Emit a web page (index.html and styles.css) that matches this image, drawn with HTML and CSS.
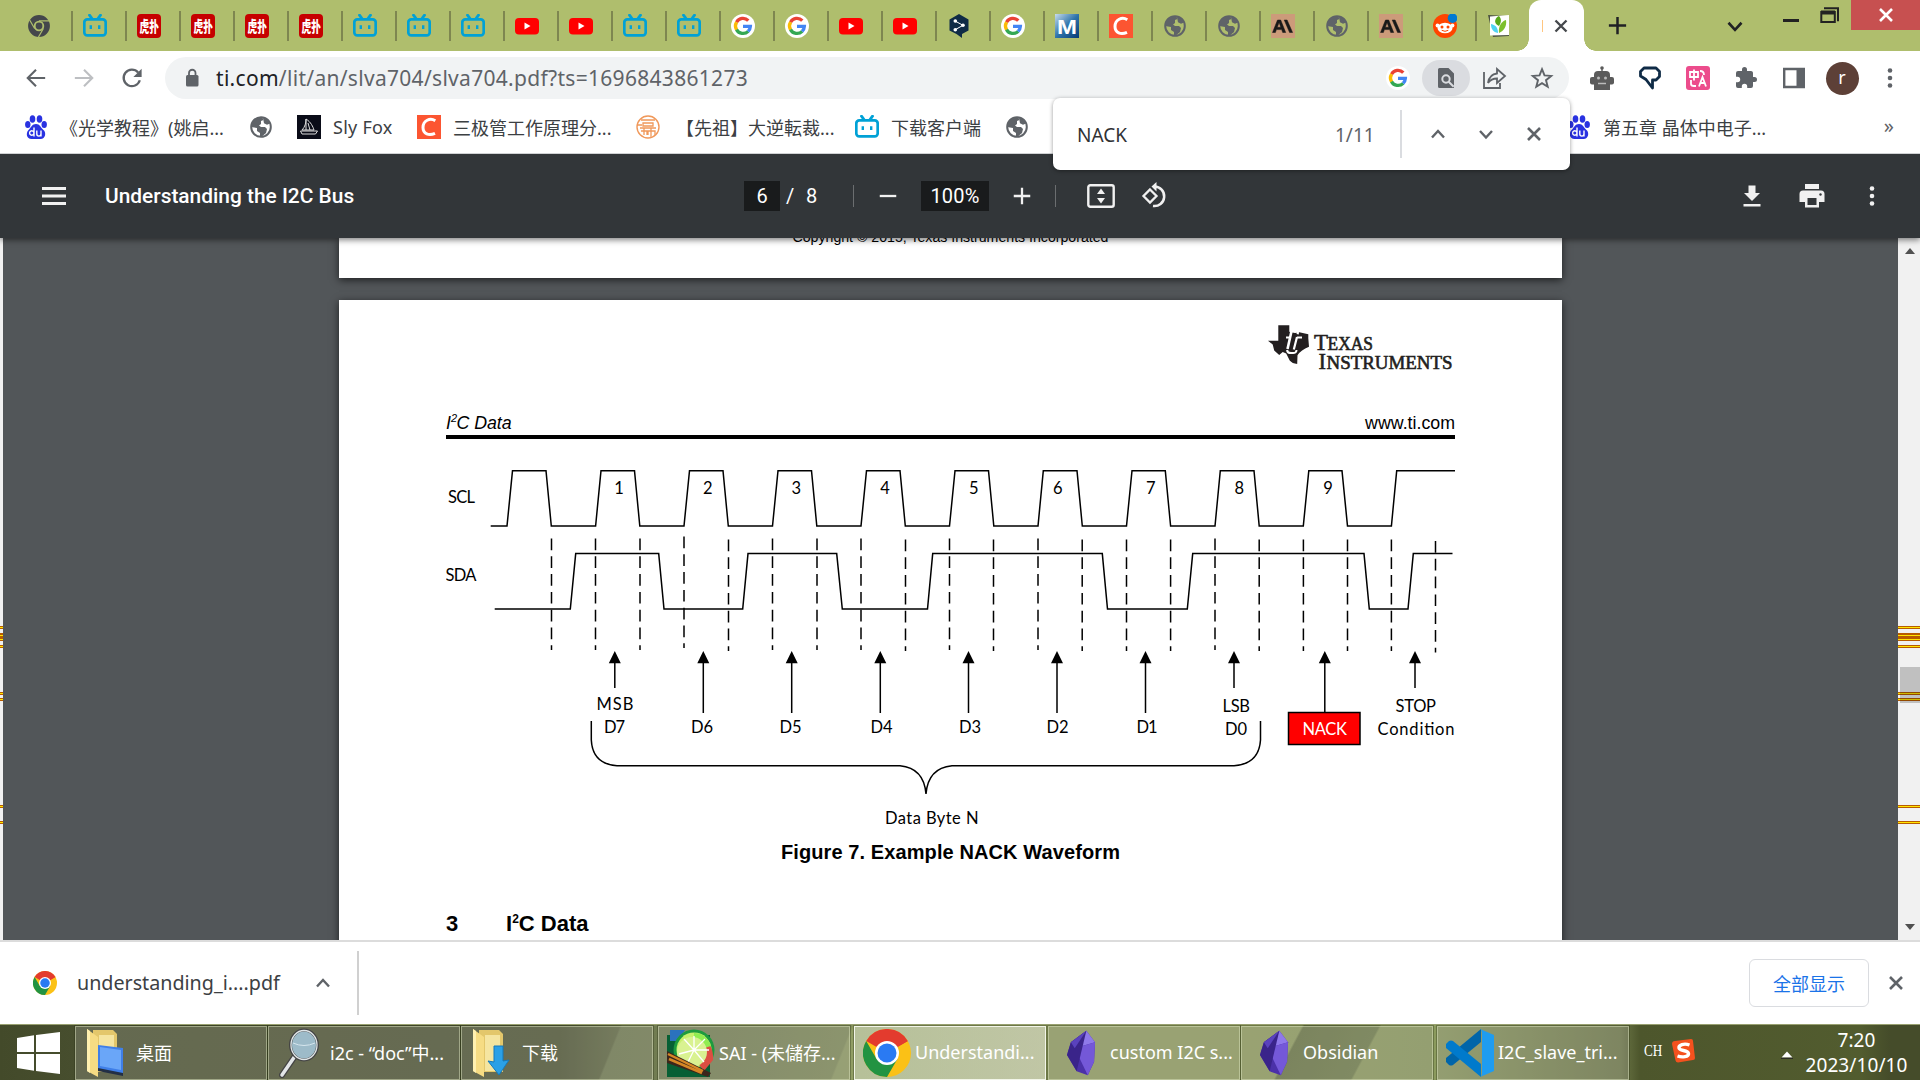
FILE: index.html
```html
<!DOCTYPE html>
<html lang="zh-CN">
<head>
<meta charset="utf-8">
<title>Understanding the I2C Bus</title>
<link rel="stylesheet" href="styles.css">
</head>
<body>
<svg class="sprite" aria-hidden="true">
  <symbol id="bili" viewBox="0 0 24 24"><path d="M6.5 1.200 9 4.600M17.500 1.200 15 4.600" stroke="#00a1d6" stroke-width="2.800" stroke-linecap="round"/><rect x="1.300" y="5.400" width="21.400" height="16" rx="3" fill="none" stroke="#00a1d6" stroke-width="2.700"/><path d="M7.800 11.300v3.600M16.200 11.300v3.600" stroke="#00a1d6" stroke-width="2.400"/></symbol>
  <symbol id="hupu" viewBox="0 0 24 24"><rect width="24" height="24" rx="4" fill="#c60000"/><text x="2.500" y="17.500" font-family="Noto Sans CJK SC, sans-serif" font-weight="900" font-size="15" textLength="19.500" lengthAdjust="spacingAndGlyphs" fill="#fff">虎扑</text></symbol>
  <symbol id="yt" viewBox="0 0 24 24"><rect y="4" width="24" height="16.500" rx="4" fill="#f00"/><path d="M9.500 8.600v7l6-3.500z" fill="#fff"/></symbol>
  <symbol id="g" viewBox="0 0 24 24"><circle cx="12" cy="12" r="12" fill="#fff"/><g fill="none" stroke-width="3.300"><path d="M5.500 8.200A7.400 7.400 0 0 1 17.300 6.700" stroke="#ea4335"/><path d="M5.600 15.800a7.400 7.400 0 0 1 0-7.700" stroke="#fbbc05"/><path d="M17.200 17.300A7.400 7.400 0 0 1 5.500 15.600" stroke="#34a853"/><path d="M12 12.300h7.400a7.400 7.400 0 0 1-2.300 5.100" stroke="#4285f4"/></g></symbol>
  <symbol id="deepl" viewBox="0 0 24 24"><path d="M12 0 21.500 5.500v11L15 20v4l-5.500-4L2.500 16.500v-11z" fill="#0f2b46"/><path d="M8 7l8 4.300-8 4.500" stroke="#fff" fill="none"/><circle cx="8.300" cy="7" r="1.800" fill="#fff"/><circle cx="16" cy="11.300" r="1.800" fill="#fff"/><circle cx="8.300" cy="15.800" r="1.800" fill="#fff"/></symbol>
  <symbol id="mdn" viewBox="0 0 24 24"><defs><linearGradient id="mg" x2="1" y2="1"><stop offset="0" stop-color="#c8dcec"/><stop offset=".5" stop-color="#2e74ab"/><stop offset="1" stop-color="#053a75"/></linearGradient></defs><rect width="24" height="24" fill="url(#mg)"/><text x="2" y="19.500" font-family="Liberation Sans" font-weight="700" font-size="21" textLength="20" lengthAdjust="spacingAndGlyphs" fill="#fff">M</text></symbol>
  <symbol id="csdn" viewBox="0 0 24 24"><rect width="24" height="24" fill="#fc5531"/><path d="M18.300 5.700C13 2.500 6 5.500 6 12.500c0 6.500 6 8.500 12 5.800" fill="none" stroke="#fff" stroke-width="3"/></symbol>
  <symbol id="globe" viewBox="0 0 24 24"><circle cx="12" cy="12" r="9.800" fill="none" stroke="#5f6368" stroke-width="2"/><path d="M2 12C2 6 7 2 13 2l1.500 3-2.500 1v3l-2 1.500L12 12h4l2 2-1 4-4.500 3.700-1.500-.5V18l-3-2v-3z" fill="#5f6368"/><path d="m14 3 4 1.500 3 4-3 1.200-3-1.400z" fill="#5f6368"/></symbol>
  <symbol id="anth" viewBox="0 0 24 24"><rect width="24" height="24" fill="#cc9b7a"/><path d="M1.500 18.500 6.500 6h3.200l5 12.500h-3L10.700 15.600H5.400l-1 2.900zM6.300 13.200h3.500L8.100 8.600zM13.200 6h2.900l5.500 12.500h-3z" fill="#191919" stroke="#191919" stroke-width=".5"/></symbol>
  <symbol id="reddit" viewBox="0 0 24 24"><circle cx="12" cy="12" r="12" fill="#ff4500"/><ellipse cx="12" cy="14" rx="7.500" ry="5.200" fill="#fff"/><circle cx="4.500" cy="11.500" r="1.900" fill="#fff"/><circle cx="19.500" cy="11.500" r="1.900" fill="#fff"/><circle cx="9" cy="13" r="1.500" fill="#ff4500"/><circle cx="15" cy="13" r="1.500" fill="#ff4500"/><path d="M8.700 16.300q3.300 2 6.600 0" stroke="#ff4500" fill="none"/><circle cx="19.500" cy="4.200" r="4.800" fill="#0079d3"/></symbol>
  <symbol id="leaf" viewBox="0 0 24 24"><path d="m1 1 20 1 1 20-16 1z" fill="#4d5344"/><path d="M3 2.500 22 1v20l-19 .5z" fill="#fff"/><path d="M12 12C5 9 9 3 12 2c3 3 2 7 0 10z" fill="#58a818"/><path d="M12 19c-1-7 3-12 7-13 1 6-2 11-7 13z" fill="#7dc02c"/><path d="M11 19c-5-1-7-4-7-9 5 1 7 4 7 9z" fill="#4fd3f2"/></symbol>
  <symbol id="baidu" viewBox="0 0 24 24"><g fill="#2932e1"><ellipse cx="8.500" cy="4" rx="2.800" ry="3.800"/><ellipse cx="15.500" cy="4" rx="2.800" ry="3.800"/><ellipse cx="3.800" cy="9.600" rx="2.700" ry="3.500"/><ellipse cx="20.200" cy="9.600" rx="2.700" ry="3.500"/><path d="M12 9c4 0 4.500 3.500 7.500 6s2 9-3 9h-9c-5 0-6-6-3-9S8 9 12 9z"/></g><path d="M10 12.500v9M10 18a2.200 2.200 0 1 0 0 .1M12.800 15.500v3.500a2 2 0 0 0 4.200 0v-3.500v6" fill="none" stroke="#fff" stroke-width="1.400"/></symbol>
  <symbol id="chrome" viewBox="0 0 48 48"><circle cx="24" cy="24" r="24" fill="#fbc116"/><path d="M24 24 3.200 12A24 24 0 0 1 44.800 12z" fill="#e33b2e"/><path d="M24 24 24 12h20.800z" fill="#e33b2e"/><path d="M3.200 12A24 24 0 0 0 24 48l10.400-18L24 24 13.600 30z" fill="#229342"/><circle cx="24" cy="24" r="12" fill="#fff"/><circle cx="24" cy="24" r="9.500" fill="#2a7af3"/></symbol>
  <symbol id="x" viewBox="0 0 24 24"><path d="m6 6 12 12M18 6 6 18" stroke="currentColor" stroke-width="2.600" fill="none"/></symbol>
  <symbol id="up" viewBox="0 0 24 24"><path d="m6 15.500 6-6.500 6 6.500" stroke="currentColor" stroke-width="2.400" fill="none"/></symbol>
  <symbol id="down" viewBox="0 0 24 24"><path d="m6 9 6 6.500L18 9" stroke="currentColor" stroke-width="2.400" fill="none"/></symbol>
  <symbol id="dots" viewBox="0 0 24 24"><g fill="currentColor"><circle cx="12" cy="4.500" r="2.300"/><circle cx="12" cy="12" r="2.300"/><circle cx="12" cy="19.500" r="2.300"/></g></symbol>
  <symbol id="obs" viewBox="0 0 30 46"><path d="M20 0 29 12 28 32 21.500 46 10 42 0 25 4 12z" fill="#4b31a8"/><path d="M20 0 29 12 8 18z" fill="#8f79ea"/><path d="M8 18 29 12 28 32 21.500 46z" fill="#7458d8"/><path d="M20 0 4 12 0 25 10 42z" fill="#3a248a"/><path d="M20 0 4 12l4 6z" fill="#5a42bd"/></symbol>
  <symbol id="folder" viewBox="0 0 40 50"><path d="M7 2h20l4 4v38H7z" fill="#e3c76b"/><path d="M13 7h15v36H13z" fill="#f5e5a0"/><path d="M1 1l11 8v40L1 43z" fill="#f6dc83"/><path d="M1 1l3 2v42l-3-2z" fill="#fff0b0"/></symbol>
</svg>

<header class="tabs">
  <div class="first-tab"><svg class="i22" viewBox="0 0 24 24"><circle cx="12" cy="12" r="8.800" fill="none" stroke="#44474b" stroke-width="6.200"/><circle cx="12" cy="12" r="3.700" fill="#44474b"/><path d="M12 6.400h11M7.200 14.700 1.800 5.500M16.800 14.700 11.400 24" stroke="#afbe6d" stroke-width="1.300"/></svg></div>
  <div class="tab"><svg><use href="#bili"/></svg></div>
  <div class="tab"><svg><use href="#hupu"/></svg></div>
  <div class="tab"><svg><use href="#hupu"/></svg></div>
  <div class="tab"><svg><use href="#hupu"/></svg></div>
  <div class="tab"><svg><use href="#hupu"/></svg></div>
  <div class="tab"><svg><use href="#bili"/></svg></div>
  <div class="tab"><svg><use href="#bili"/></svg></div>
  <div class="tab"><svg><use href="#bili"/></svg></div>
  <div class="tab"><svg><use href="#yt"/></svg></div>
  <div class="tab"><svg><use href="#yt"/></svg></div>
  <div class="tab"><svg><use href="#bili"/></svg></div>
  <div class="tab"><svg><use href="#bili"/></svg></div>
  <div class="tab"><svg><use href="#g"/></svg></div>
  <div class="tab"><svg><use href="#g"/></svg></div>
  <div class="tab"><svg><use href="#yt"/></svg></div>
  <div class="tab"><svg><use href="#yt"/></svg></div>
  <div class="tab"><svg><use href="#deepl"/></svg></div>
  <div class="tab"><svg><use href="#g"/></svg></div>
  <div class="tab"><svg><use href="#mdn"/></svg></div>
  <div class="tab"><svg><use href="#csdn"/></svg></div>
  <div class="tab"><svg><use href="#globe"/></svg></div>
  <div class="tab"><svg><use href="#globe"/></svg></div>
  <div class="tab"><svg><use href="#anth"/></svg></div>
  <div class="tab"><svg><use href="#globe"/></svg></div>
  <div class="tab"><svg><use href="#anth"/></svg></div>
  <div class="tab"><svg><use href="#reddit"/></svg></div>
  <div class="tab"><svg><use href="#leaf"/></svg></div>
  <div class="tab-active"><i></i><svg><use href="#x"/></svg></div>
  <svg class="newtab" viewBox="0 0 24 24"><path d="M12 3v18M3 12h18" stroke="#202124" stroke-width="2.600"/></svg>
  <svg class="tabmenu"><use href="#down"/></svg>
  <div class="winbtns">
    <svg width="24" height="30" viewBox="0 0 24 30"><path d="M4 20.500h16" stroke="#222" stroke-width="3"/></svg>
    <svg width="24" height="30" viewBox="0 0 24 30"><path d="M6 8.200h14v13" fill="none" stroke="#222" stroke-width="2"/><path d="M3.300 12h13.500v10H3.300z" fill="none" stroke="#222" stroke-width="2"/><path d="M3 12.500h14" stroke="#222" stroke-width="4"/></svg>
    <div class="close"><svg><use href="#x"/></svg></div>
  </div>
</header>

<div class="toolbar">
  <svg class="nav" viewBox="0 0 24 24"><path d="M22 12H3.500M12 3l-9 9 9 9" fill="none" stroke="#5f6368" stroke-width="2.300"/></svg>
  <svg class="nav" viewBox="0 0 24 24"><path d="M2 12h18.500M12 3l9 9-9 9" fill="none" stroke="#bdbfc2" stroke-width="2.300"/></svg>
  <svg class="nav" viewBox="0 0 24 24"><path d="M20.500 14.500A9 9 0 1 1 18.700 6" fill="none" stroke="#5f6368" stroke-width="2.500"/><path d="M22.500 2v9h-9z" fill="#5f6368"/></svg>
  <div class="omnibox">
    <svg class="lock" viewBox="0 0 14 20"><rect x="1" y="7" width="12.500" height="11.500" rx="1.500" fill="#5f6368"/><path d="M4 8V5a3.200 3.200 0 0 1 6.500 0v3" fill="none" stroke="#5f6368" stroke-width="1.800"/></svg>
    <span class="url"><b>ti.com</b>/lit/an/slva704/slva704.pdf?ts=1696843861273</span>
    <div class="actions">
      <span><svg width="24" height="24"><use href="#g"/></svg></span>
      <span class="on"><svg width="24" height="24" viewBox="0 0 24 24"><path d="M5.500 2h9L20 7.500V22H5.500a1.500 1.500 0 0 1-1.500-1.500v-17A1.500 1.500 0 0 1 5.500 2z" fill="#5f6368"/><circle cx="12" cy="13" r="3.700" fill="none" stroke="#dadce0" stroke-width="2"/><path d="m14.700 15.700 5 5" stroke="#dadce0" stroke-width="2"/></svg></span>
      <span><svg width="26" height="24" viewBox="0 0 26 24"><path d="M3 6v16h16v-5" fill="none" stroke="#5f6368" stroke-width="1.800"/><path d="M7 17c1-6 4-9 9-9.500V3l8 7-8 7v-4.500c-4 0-6.500 1-9 4.500z" fill="none" stroke="#5f6368" stroke-width="1.800"/></svg></span>
      <span><svg width="24" height="24" viewBox="0 0 24 24"><path d="m12 3.200 2.500 6.200 6.700.5-5.200 4.300 1.700 6.500L12 17.100l-5.700 3.600L8 14.200 2.800 9.900l6.700-.5z" fill="none" stroke="#5f6368" stroke-width="1.900"/></svg></span>
    </div>
  </div>
  <div class="exts">
    <span><svg viewBox="0 0 24 24"><g fill="#5b5b5b"><circle cx="12" cy="2" r="1.800"/><path d="M11.300 2h1.400v4h-1.400z"/><path d="M4 9a4 4 0 0 1 4-4h8a4 4 0 0 1 4 4v15H4z"/><rect y="11" width="24" height="7.500" rx="2"/></g><circle cx="8.500" cy="12" r="1.500" fill="#bbb"/><circle cx="15.500" cy="12" r="1.500" fill="#bbb"/><path d="M8 17.500h8" stroke="#bbb" stroke-width="1.500"/></svg></span>
    <span><svg viewBox="0 0 24 24"><path d="M6 2h12l3.500 3.500v5L18 14h-3.500v8L8 13.500 2.500 10V5.500z" fill="none" stroke="#0f2b46" stroke-width="2.800" stroke-linejoin="round"/></svg></span>
    <span><svg viewBox="0 0 24 24"><rect width="24" height="24" rx="3" fill="#ec4c8c"/><path d="M4 6h8v5H4zM8 3.500v11M14 5q4 0 4 4M5 14v4q0 2 3 2h2M13 20.500l3.500-9.500 3.500 9.500M14.500 17h4.500" fill="none" stroke="#fff" stroke-width="1.800"/></svg></span>
    <span><svg viewBox="0 0 24 24"><path d="M20.500 11H19V7c0-1.100-.9-2-2-2h-4V3.500a2.500 2.500 0 0 0-5 0V5H4a2 2 0 0 0-2 2v3.800h1.500a2.700 2.700 0 0 1 0 5.400H2V20a2 2 0 0 0 2 2h3.800v-1.500a2.700 2.700 0 0 1 5.400 0V22H17a2 2 0 0 0 2-2v-4h1.500a2.500 2.500 0 0 0 0-5z" fill="#5f6368"/></svg></span>
    <span><svg viewBox="0 0 24 24"><path d="M2.200 3h19.600v18H2.200z" fill="none" stroke="#5f6368" stroke-width="2.400"/><path d="M14.500 3h7v18h-7z" fill="#5f6368"/></svg></span>
    <span><b class="avatar">r</b></span>
    <span><svg class="dim"><use href="#dots"/></svg></span>
  </div>
</div>

<nav class="bookmarks">
  <svg><use href="#baidu"/></svg><span class="b1">《光学教程》(姚启...</span>
  <svg><use href="#globe"/></svg><span class="gap"></span>
  <svg viewBox="0 0 24 24"><rect width="24" height="24" fill="#0a0c18"/><path d="M9 4c5 3 7 8 8 11H5c3-3 4-7 4-11zM9 4v11M3.500 16h17l-2 3H5zM11 8l2 7" fill="none" stroke="#ddd"/></svg><span class="b2">Sly Fox</span>
  <svg><use href="#csdn"/></svg><span class="b3">三极管工作原理分...</span>
  <svg viewBox="0 0 24 24"><circle cx="12" cy="12" r="11" fill="#fff" stroke="#f0985a" stroke-width="1.400"/><path d="M5 5h14M7 8h10v3H7zM4 13h16M8 13v7M5 16h6v4M12 20v-4h7v4M15 13v9M2 10h4" fill="none" stroke="#f0985a" stroke-width="1.300"/></svg><span class="b4">【先祖】大逆転裁...</span>
  <svg><use href="#bili"/></svg><span class="b5">下载客户端</span>
  <svg><use href="#globe"/></svg>
  <svg class="last"><use href="#baidu"/></svg><span class="b6">第五章 晶体中电子...</span>
  <span class="more">»</span>
</nav>

<div class="findbar">
  <span class="q">NACK</span><span class="n">1/11</span><i></i>
  <svg><use href="#up"/></svg><svg><use href="#down"/></svg><svg><use href="#x"/></svg>
</div>

<div class="pdfbar">
  <svg class="menu" viewBox="0 0 24 18"><path d="M0 1.500h24M0 9h24M0 16.500h24" stroke="#f1f1f1" stroke-width="2.800"/></svg>
  <span class="title">Understanding the I2C Bus</span>
  <div class="ctl">
    <span class="box pg">6</span><span class="sl">/</span><span class="tot">8</span><i></i>
    <svg class="c1" viewBox="0 0 24 24"><path d="M3 12h18" stroke="#f1f1f1" stroke-width="2.500"/></svg>
    <span class="box zm">100%</span>
    <svg class="c2" viewBox="0 0 24 24"><path d="M12 3v18M3 12h18" stroke="#f1f1f1" stroke-width="2.500"/></svg><i></i>
    <svg class="c3" viewBox="0 0 28 24"><rect x="1.300" y="1.300" width="25.400" height="21.400" rx="2" fill="none" stroke="#f1f1f1" stroke-width="2.400"/><path d="M14 4.500 18 10h-8zM14 19.500 18 14h-8z" fill="#f1f1f1"/></svg>
    <svg class="c4" viewBox="0 0 28 28"><path d="m9 7.500 6.500 6.500L9 20.500 2.500 14z" fill="none" stroke="#f1f1f1" stroke-width="2.300"/><path d="M13.500 4.500A9.800 9.800 0 1 1 12 24" fill="none" stroke="#f1f1f1" stroke-width="2.500"/><path d="M15.500 0v9.500l-5-5z" fill="#f1f1f1"/></svg>
  </div>
  <svg class="dl" viewBox="0 0 24 24"><path d="M8.500 1.500h7v7.500H20l-8 8-8-8h4.500zM3.500 20h17v2.500h-17z" fill="#f1f1f1"/></svg>
  <svg class="pr" viewBox="0 0 26 24"><path d="M6 0h14v5H6zM4 6.500h18A3.500 3.500 0 0 1 25.500 10v8H20v5.500H6V18H.5v-8A3.500 3.500 0 0 1 4 6.500z" fill="#f1f1f1"/><path d="M8.500 14h9v7h-9z" fill="#323639"/><circle cx="21.500" cy="10.500" r="1.200" fill="#323639"/></svg>
  <svg class="md"><use href="#dots"/></svg>
</div>

<main class="viewer">
  <div class="edge"><b class="m626"></b><b class="m633"></b><b class="m638"></b><b class="m645"></b><b class="m692"></b><b class="m698"></b><b class="m805"></b><b class="m821"></b></div>
  <div class="pages">
    <section class="page prev"><p>Copyright © 2015, Texas Instruments Incorporated</p></section>
    <section class="page cur">
      <svg class="logo" width="186" height="46" viewBox="1268 324 186 46">
        <path d="M1278.300 325.300h11v6.500q5 2 10 .5l9 2v4l.7 8.500q-8 3-11.500 8.500l-.3 8.700q-5-.5-7.500-3.500l-3.500-7-3.500-1.500-3.500 3-5-4.500-1.500-6-4.700-3.800h10.300z" fill="#231f20"/>
        <g fill="none" stroke="#fff"><path stroke-width="2.600" d="m1292 329-4.500 20"/><path stroke-width="2.200" d="m1297 337-3.200 12.500M1298 332l-.4 2.200M1286 337.500h4.500M1297 337.500h5"/><path stroke-width="2" d="M1287 350q.5 3.500 5 3 4.500.5 4.500-3"/></g>
        <g fill="#231f20" font-family="Liberation Serif" stroke="#231f20" stroke-width=".6">
          <text x="1314" y="349.500" font-size="23.500" textLength="14" lengthAdjust="spacingAndGlyphs">T</text>
          <text x="1327.500" y="349.500" font-size="18.500" textLength="45.500" lengthAdjust="spacingAndGlyphs">EXAS</text>
          <text x="1318.500" y="368.700" font-size="23.500" textLength="7.500" lengthAdjust="spacingAndGlyphs">I</text>
          <text x="1326.500" y="368.700" font-size="18.500" textLength="126" lengthAdjust="spacingAndGlyphs">NSTRUMENTS</text>
        </g>
      </svg>
      <div class="runhead"><em>I<sup>2</sup>C Data</em><span>www.ti.com</span></div>
      <svg class="wave" width="1009" height="401" viewBox="446 439 1009 401">
        <g fill="none" stroke="#000" stroke-width="1.500">
          <path d="M490.700 526H507L512.500 470.700H546L551.300 526H595.600L601 470.700H634.500L639.800 526H684L689.500 470.700H723L728.300 526H772.500L778 470.700H811.500L816.800 526H861L866.500 470.700H900L905.300 526H949.500L955 470.700H988.500L993.800 526H1038L1043.300 470.700H1077L1082.300 526H1126.500L1132 470.700H1165.300L1170.600 526H1215L1220.300 470.700H1254L1259.200 526H1303.300L1308.800 470.700H1342L1347.500 526H1391.400L1396.700 470.700H1455"/>
          <path d="M494.700 609H570.300L575.700 553.600H658.700L664 609H742.700L748 553.600H836.700L842.300 609H927.500L932.700 553.600H1102.300L1107.500 609H1187.300L1192.700 553.600H1364L1369.300 609H1408L1413.300 553.600H1452.500"/>
          <path stroke-dasharray="11.700 6.100" d="M551.500 538.500V650M595.500 538.500V650M640 538.500V650M684 536.500V648M728.500 539.500V651M772.500 538.500V650M817 538.500V650M861 538.500V650M905.500 539.500V651M949.500 538.500V650M993.500 539.500V651M1038 538.500V650M1082.200 539.500V651M1126.500 539.500V651M1170.600 539.500V651M1215 538.500V650M1259.200 539.500V651M1303.400 539.500V651M1347.500 539.500V651M1391.400 539.500V651M1435.500 541V652.500"/>
          <path d="M614.800 688v-30M703.300 713v-55M791.700 713v-55M880.300 713v-55M968.500 713v-55M1057 713v-55M1145.500 713v-55M1234 688v-30M1324.800 713v-55M1415 688v-30"/>
          <path d="M591.300 721V740Q592.500 764 617 765.700H900Q924 768 926 794Q928 768 952 765.700H1234Q1259 764 1260.500 740V721"/>
        </g>
        <path d="M614.800 651l6 12.300h-12zM703.300 651l6 12.300h-12zM791.700 651l6 12.300h-12zM880.300 651l6 12.300h-12zM968.500 651l6 12.300h-12zM1057 651l6 12.300h-12zM1145.500 651l6 12.300h-12zM1234 651l6 12.300h-12zM1324.800 651l6 12.300h-12zM1415 651l6 12.300h-12z"/>
        <rect x="1288.500" y="712.500" width="71.500" height="32" fill="#f00" stroke="#000" stroke-width="1.500"/>
        <g class="lbl">
          <text x="448" y="503" textLength="27">SCL</text><text x="445.500" y="581" textLength="31">SDA</text>
          <g text-anchor="middle"><text x="619" y="494">1</text><text x="707.700" y="494">2</text><text x="796.300" y="494">3</text><text x="885" y="494">4</text><text x="973.700" y="494">5</text><text x="1057.700" y="494">6</text><text x="1150.700" y="494">7</text><text x="1239.300" y="494">8</text><text x="1328" y="494">9</text></g>
          <text x="596.500" y="710" textLength="37">MSB</text><text x="604" y="733" textLength="21">D7</text>
          <text x="691" y="733" textLength="22">D6</text><text x="779.500" y="733" textLength="22">D5</text><text x="870.500" y="733" textLength="22">D4</text><text x="959" y="733" textLength="22">D3</text><text x="1046.500" y="733" textLength="22">D2</text><text x="1136.500" y="733" textLength="21">D1</text>
          <text x="1222.500" y="712" textLength="27.500">LSB</text><text x="1225" y="735" textLength="22">D0</text>
          <text x="1395.500" y="712" textLength="40.500">STOP</text><text x="1377.500" y="735" textLength="77">Condition</text>
          <text x="1302.500" y="735" textLength="44.500" fill="#fff">NACK</text>
          <text x="885" y="824" textLength="93.500">Data Byte N</text>
        </g>
      </svg>
      <p class="caption">Figure 7. Example NACK Waveform</p>
      <h2><span>3</span>I<sup>2</sup>C Data</h2>
    </section>
  </div>
  <div class="scroll"><u class="au"></u><u class="ad"></u><b class="m626"></b><b class="m633"></b><b class="m638"></b><b class="m645"></b><b class="m692"></b><b class="m698"></b><b class="m805"></b><b class="m821"></b><s></s></div>
</main>

<div class="downloads">
  <svg class="ic"><use href="#chrome"/></svg><span class="fn">understanding_i....pdf</span><svg class="up"><use href="#up"/></svg><i></i>
  <button>全部显示</button><svg class="cl"><use href="#x"/></svg>
</div>

<footer class="taskbar">
  <div class="start"><svg width="43" height="42" viewBox="0 0 43 42"><path d="M0 6 17 3.300V20H0zM19 3 43 0v20H19zM0 22h17v16.700L0 36zM19 22h24v20l-24-3z" fill="#fff"/></svg></div>
  <div class="task"><svg class="fo" viewBox="0 0 40 50"><use href="#folder"/><path d="M12 17l25 3v26l-25-5z" fill="#3f7fe8"/><path d="M14 19l21 3v20l-21-4z" fill="#6aa6f8"/><path d="M12 40l25 5v3l-25-5z" fill="#222f45"/></svg><span class="t1">桌面</span></div>
  <div class="task g1"><svg class="fo" viewBox="0 0 40 50"><path d="m16 28-13 19" stroke="#444" stroke-width="6" stroke-linecap="round"/><path d="m16 28-13 19" stroke="#e3e6e8" stroke-width="3.500" stroke-linecap="round"/><ellipse cx="25" cy="17" rx="13.500" ry="15" fill="#9dbbc9" stroke="#444" stroke-width="3"/><ellipse cx="25" cy="17" rx="13" ry="14.500" fill="none" stroke="#dfe5e8" stroke-width="1.300"/><path d="M14 15q11 5 22 0" stroke="#d6e6ee" fill="none"/></svg><span class="t2">i2c - “doc”中...</span></div>
  <div class="task g1"><svg class="fo" viewBox="0 0 40 50"><use href="#folder"/><path d="M22 18h9v15l6-1-10 15-11-14 6 1z" fill="#2ba0e6" stroke="#1579bb"/></svg><span class="t3">下载</span></div>
  <div class="task g5"><svg class="big" viewBox="0 0 48 48"><rect y="6" width="43" height="42" fill="#075f34"/><path d="M3 1h15l-7 11H3z" fill="#2b72bd"/><circle cx="27" cy="21" r="20.500" fill="#1d9b3e"/><circle cx="27" cy="21" r="17.500" fill="#c7f06c"/><path d="M35 7q12 9 11 24l-9 11-8-10z" fill="#dc4e42"/><path d="M27 4q12 0 17 13l-17 5z" fill="#90ed51"/><circle cx="25" cy="23" r="15" fill="#d9f291"/><path d="M27 21 17 10M27 21V7M27 21l11-11M27 21h15M27 21 12 25M27 21l10 12M27 21l-7 14" stroke="#fff" stroke-width="1.300"/><path d="m0 22 44 22-3 4L0 34z" fill="#3c261b"/><path d="m1 25 35 17M2 30l33 14" stroke="#d58725" stroke-width="2.500"/></svg><span class="t4">SAI - (未儲存...</span></div>
  <div class="task active g4"><svg class="big"><use href="#chrome"/></svg><span class="t4">Understandi...</span></div>
  <div class="task g2"><svg class="ob"><use href="#obs"/></svg><span class="t6">custom I2C s...</span></div>
  <div class="task g1"><svg class="ob"><use href="#obs"/></svg><span class="t6">Obsidian</span></div>
  <div class="task g4"><svg class="big" viewBox="0 0 48 48"><path d="M35 0v13L7 36q-2 1-4 0l-3-3q-1-2 0-4z" fill="#0065a9"/><path d="M35 48V35L7 12q-2-1-4 0l-3 3q-1 2 0 4z" fill="#007acc"/><path d="M34 0 48 6v36l-14 6q2-1 2-4V4q0-3-2-4z" fill="#1f9cf0"/></svg><span class="t4">I2C_slave_tri...</span></div>
  <div class="tray">
    <span class="ch">CH</span>
    <svg class="sg" viewBox="0 0 24 24"><path d="M4 2 20 0q2 0 2 2l2 17q0 2-2 2L7 23.500q-2 0-2.500-2L1 5q0-3 3-3z" fill="#f4511e"/><path d="M18.500 6C13 4 7.500 6 8 9s9 2 9.500 5.500S11 18.500 6.500 17" fill="none" stroke="#fff" stroke-width="3.400"/></svg>
    <svg class="tri" viewBox="0 0 12 8"><path d="M6 .5 11.500 6.500H.5z" fill="#fff"/><path d="M0 7.300h12" stroke="#222"/></svg>
    <div class="clock"><span>7:20</span><span>2023/10/10</span></div>
  </div>
</footer>
</body>
</html>
```
FILE: styles.css
```css
* { box-sizing: border-box; }
body { margin: 0; width: 1920px; height: 1080px; overflow: hidden; display: flex; flex-direction: column; position: relative; background: #fff; font-family: "Noto Sans", "Noto Sans CJK SC", sans-serif; color: #3c4043; }
svg { display: block; flex: none; }
span { white-space: nowrap; }
p, h2 { margin: 0; }
.sprite { position: absolute; width: 0; height: 0; }

.tabs { height: 51px; flex: none; display: flex; align-items: center; background: #afbe6d; }
.first-tab { width: 71px; flex: none; padding-left: 28px; }
.i22 { width: 22px; height: 22px; }
.tab { width: 54.030px; height: 30px; flex: none; display: flex; align-items: center; padding-left: 9.500px; border-left: 2px solid #7e8650; }
.tab svg { width: 24px; height: 24px; }
.tab-active { width: 55px; height: 51px; flex: none; background: #fff; border-radius: 12px 12px 0 0; position: relative; display: flex; align-items: center; padding-left: 13px; color: #45484c; }
.tab-active::before, .tab-active::after { content: ""; position: absolute; bottom: 0; width: 12px; height: 12px; }
.tab-active::before { left: -12px; background: radial-gradient(circle at 0 0, transparent 11.500px, #fff 12px); }
.tab-active::after { right: -12px; background: radial-gradient(circle at 100% 0, transparent 11.500px, #fff 12px); }
.tab-active i { width: 1px; height: 12px; background: #ffc680; }
.tab-active svg { width: 22px; height: 22px; margin-left: 7px; }
.newtab { width: 23px; height: 23px; margin-left: 22px; }
.tabmenu { width: 26px; height: 26px; margin-left: 93px; color: #202124; }
.winbtns { display: flex; align-self: flex-start; margin-left: auto; }
.winbtns > svg + svg { margin: 0 9px 0 15px; }
.close { width: 69px; height: 30px; background: #c75050; color: #fff; display: grid; place-items: center; }
.close svg { width: 24px; height: 24px; }

.toolbar { height: 50px; flex: none; display: flex; align-items: center; padding: 4px 0 0 25px; }
.nav { width: 22px; height: 22px; margin-right: 26px; }
.omnibox { height: 42px; width: 1404px; margin-left: -4px; border-radius: 21px; background: #f1f3f4; display: flex; align-items: center; padding-left: 20px; }
.lock { width: 14px; height: 20px; }
.url { margin-left: 17px; font-size: 21px; letter-spacing: .3px; color: #5f6368; }
.url b { font-weight: 400; color: #202124; }
.actions { margin-left: auto; display: flex; padding-right: 3px; }
.actions span { width: 48px; height: 36px; border-radius: 18px; display: grid; place-items: center; }
.actions .on { background: #dadce0; }
.exts { display: flex; margin-left: 9px; }
.exts span { width: 48px; height: 36px; display: grid; place-items: center; }
.exts svg { width: 24px; height: 24px; }
.dim { color: #5f6368; }
.avatar { width: 33px; height: 33px; border-radius: 50%; background: #5d4037; color: #fff; font-weight: 400; font-size: 18px; line-height: 30px; text-align: center; }

.bookmarks { height: 53px; flex: none; display: flex; align-items: center; padding-left: 24px; border-bottom: 1px solid #d0d2d4; font-size: 18px; }
.bookmarks svg { width: 24px; height: 24px; }
.bookmarks span { margin-left: 12px; flex: none; }
.b1 { width: 189px; }
.bookmarks .gap { width: 24px; margin: 0; }
.b2 { width: 83px; letter-spacing: .25px; margin-right: 1px; }
.b3 { width: 183px; }
.bookmarks .b4 { width: 171px; margin-left: 16px; margin-right: 8px; }
.b5 { width: 102px; margin-right: 12px; }
.bookmarks .last { margin-left: 538px; }
.b6 { width: 190px; }
.bookmarks .more { margin-left: auto; margin-right: 26px; font-size: 20px; color: #5f6368; padding-bottom: 4px; }

.findbar { position: absolute; z-index: 3; left: 1053px; top: 98px; width: 517px; height: 72px; border-radius: 7px; background: #fff; box-shadow: 0 1px 4px rgba(0,0,0,.4); display: flex; align-items: center; padding-left: 24px; font-size: 19px; color: #5f6368; }
.findbar > * { flex: none; }
.findbar span { padding-top: 2px; }
.findbar .q { width: 258px; color: #303134; }
.findbar .n { width: 65px; }
.findbar i { width: 2px; height: 48px; background: #dadce0; margin-right: 24px; }
.findbar svg { width: 24px; height: 24px; margin-right: 24px; }

.pdfbar { height: 84px; flex: none; display: flex; align-items: center; background: #323639; color: #fff; padding-left: 42px; font-family: Roboto, sans-serif; font-size: 20px; box-shadow: 0 2px 6px rgba(0,0,0,.5); clip-path: inset(0 0 -10px 0); position: relative; z-index: 1; }
.menu { width: 24px; height: 18px; }
.title { margin-left: 39px; width: 639px; font-weight: 500; font-size: 20.900px; }
.ctl { display: flex; align-items: center; width: 1004px; }
.box { height: 30px; background: #191b1c; text-align: center; line-height: 31px; }
.pg { width: 36px; }
.sl { margin-left: 6px; width: 20px; }
.tot { width: 47px; }
.ctl i { width: 1px; height: 22px; background: #6b6e70; }
.c1, .c2 { width: 22px; height: 22px; }
.c1 { margin: 0 22px 0 23px; }
.zm { width: 68px; letter-spacing: .2px; }
.c2 { margin: 0 22px; }
.c3 { width: 28px; height: 24px; margin: 0 26px 0 31px; }
.c4 { width: 28px; height: 28px; }
.dl { width: 24px; height: 24px; margin-left: -8px; margin-right: 35px; }
.pr { width: 26px; height: 24px; margin-right: 35px; }
.md { width: 24px; height: 24px; color: #f1f1f1; }

.viewer { height: 702px; flex: none; display: flex; background: #525659; position: relative; overflow: hidden; }
.edge { width: 3px; background: #f1f1f1; position: relative; }
.pages { width: 1895px; padding-left: 336px; display: flex; flex-direction: column; gap: 22px; }
.page { width: 1223px; flex: none; background: #fff; box-shadow: 0 2px 8px rgba(0,0,0,.65); color: #000; font-family: "Liberation Sans", sans-serif; }
.prev { height: 40px; text-align: center; font-size: 14.150px; line-height: 16px; }
.prev p { margin-top: -9px; }
.cur { height: 680px; padding: 24px 107px 0; }
.logo { margin-left: 822px; }
.runhead { margin-top: 40px; height: 29px; border-bottom: 4px solid #000; display: flex; justify-content: space-between; font-size: 17.800px; line-height: 27px; }
.runhead sup { font-size: 11px; line-height: 0; letter-spacing: -.5px; }
.runhead em { letter-spacing: -.05px; }
.wave { font-family: Lato, sans-serif; font-size: 16.500px; }
.caption { text-align: center; font-weight: 700; font-size: 20px; letter-spacing: .1px; line-height: 24px; }
.cur h2 { margin-top: 48px; font-size: 22px; line-height: 24px; }
.cur h2 span { display: inline-block; width: 60px; }
.cur h2 sup { font-size: 12px; line-height: 0; }
.scroll { width: 22px; background: #f1f1f1; position: relative; }
.scroll s { position: absolute; left: 2px; right: 0; top: 429px; height: 36px; background: rgba(0,0,0,.2); }
.scroll u { position: absolute; left: 7px; border: 5.500px solid transparent; }
.scroll .au { top: 5px; border-bottom: 6px solid #505050; }
.scroll .ad { top: 686px; border-top: 6px solid #505050; }
.viewer b { position: absolute; left: 0; right: 0; height: 3px; background: linear-gradient(#b85c00 1px, #ffe600 1px 2px, #b85c00 2px); }
.viewer .m626 { top: 388px; }
.viewer .m633 { top: 395px; height: 5px; background: linear-gradient(#b85c00 2px, #ffe600 2px 3px, #b85c00 3px); }
.viewer .m638 { top: 400px; }
.viewer .m645 { top: 407px; }
.viewer .m692 { top: 454px; }
.viewer .m698 { top: 460px; }
.viewer .m805 { top: 567px; }
.viewer .m821 { top: 583px; }

.downloads { height: 84px; flex: none; border-top: 2px solid #dcdcdc; display: flex; align-items: center; padding-left: 33px; font-size: 19.700px; }
.ic { width: 24px; height: 24px; }
.fn { margin-left: 20px; width: 234px; padding-bottom: 2px; }
.downloads .up { width: 24px; height: 24px; color: #5f6368; }
.downloads i { width: 2px; height: 64px; margin-left: 22px; background: #d0d0d0; }
.downloads button { margin-left: auto; width: 120px; height: 48px; border: 1px solid #dadce0; border-radius: 6px; background: #fff; color: #1a73e8; font: 18px "Noto Sans CJK SC", sans-serif; padding: 0; }
.cl { width: 24px; height: 24px; margin: 0 12px 0 15px; color: #5f6368; }

.taskbar { height: 56px; flex: none; display: flex; padding-top: 1px; border-top: 1px solid #98a070; background: linear-gradient(112deg, transparent 575px, rgba(113,124,82,.9) 577px, rgba(120,132,84,.7) 790px, transparent 792px), linear-gradient(118deg, transparent 1150px, #687543 1152px, #6f7d49 1218px, transparent 1220px), linear-gradient(90deg, #434a2a 0, #474e2e 75px, #4b5232 560px, #7c8858 700px, #929f65 860px, #92a05f 1250px, #8c9b5e 1430px, #6c7747 1620px, #4d562c 1640px, #525c2f 1860px, #454c2a 1890px); color: #fff; font-size: 18px; }
.start { width: 75px; flex: none; padding: 6px 0 0 17px; }
.task { width: 192px; height: 54px; flex: none; border: 1px solid rgba(220,228,190,.5); background: rgba(170,170,160,.3); display: flex; align-items: center; box-shadow: 0 0 0 1px rgba(40,48,20,.35); }
.task span { padding-bottom: 2px; }
.g1 { margin-left: 1px; }
.g2 { margin-left: 2px; }
.g4 { margin-left: 4px; }
.g5 { margin-left: 5px; }
.active { background: linear-gradient(90deg, rgba(225,232,215,.45), rgba(230,230,220,.55)); border-color: #f2f5e8; }
.fo { width: 40px; height: 50px; margin-left: 10px; }
.t1 { margin-left: 10px; }
.t2 { margin-left: 11px; }
.t3 { margin-left: 10px; }
.big { width: 48px; height: 48px; margin-left: 8px; }
.t4 { margin-left: 4px; }
.ob { width: 29px; height: 46px; margin-left: 18px; }
.t6 { margin-left: 14px; }
.tray { flex: 1; display: flex; align-items: center; padding-left: 15px; }
.ch { font: 16px "Liberation Serif", serif; width: 27px; padding-bottom: 4px; transform: scaleX(.82); transform-origin: 0 0; }
.sg { width: 24px; height: 24px; margin: 0 0 4px 0; }
.tri { width: 12px; height: 8px; margin-left: 86px; margin-top: 4px; }
.clock { flex: 1; display: flex; flex-direction: column; align-items: center; line-height: 25px; font-size: 19px; letter-spacing: .1px; padding: 0 0 1px 0; }
```
